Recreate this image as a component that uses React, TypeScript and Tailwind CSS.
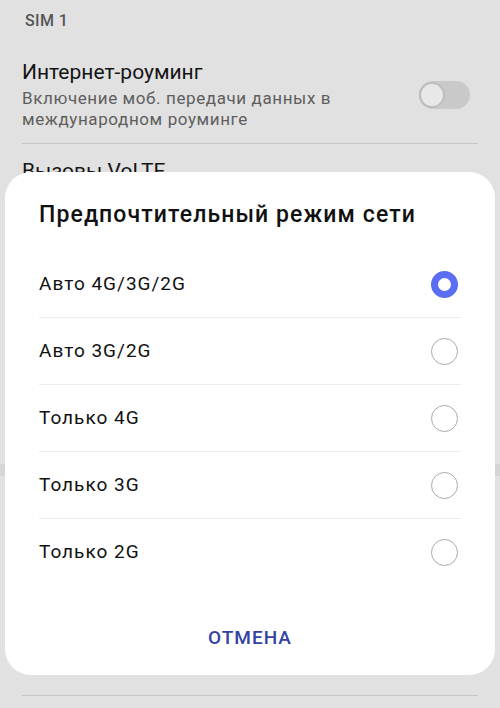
import React from "react";

const options = ["Авто 4G/3G/2G", "Авто 3G/2G", "Только 4G", "Только 3G", "Только 2G"];

export default function App() {
  return (
    <div
      className="relative w-[500px] h-[708px] overflow-hidden bg-[#e1e1e1]"
      style={{ fontFamily: "Roboto, 'Noto Sans', sans-serif" }}
    >
      {/* underlying page */}
      <div className="flex flex-col">
        <div className="h-[42px] pl-[25px] flex items-center text-[16px] tracking-[0.4px] font-medium text-[#555555]">SIM 1</div>
        <div className="mx-[22px] flex items-center justify-between pt-[16px] pb-[13px]">
          <div className="flex flex-col">
            <div className="text-[21px] leading-[28px] text-[#141414]">Интернет-роуминг</div>
            <div className="text-[17px] leading-[21px] tracking-[0.6px] text-[#5e5e5e] mt-[2px]">
              Включение моб. передачи данных в
              <br />
              международном роуминге
            </div>
          </div>
          <div className="relative w-[51px] h-[28px] rounded-full bg-[#c9c9c9] mr-[8px] mt-[2px]">
            <div className="absolute left-0 top-[1px] w-[26px] h-[26px] rounded-full bg-[#e8e8e8] border-[2px] border-[#bdbdbd]" />
          </div>
        </div>
        <div className="mx-[22px] h-px bg-[#c6c6c6]" />
        <div className="mx-[22px] pt-[13px] text-[21px] leading-[28px] text-[#141414]">Вызовы VoLTE</div>
        <div className="h-[279px]" />
        <div className="h-[12px] bg-[#d5d5d5]" />
        <div className="h-[219px]" />
        <div className="mx-[22px] h-px bg-[#c6c6c6]" />
      </div>

      {/* dialog */}
      <div className="absolute left-[5px] right-[5px] top-[172px] h-[503px] rounded-[26px] bg-white flex flex-col px-[34px]">
        <div className="pt-[28px] h-[79px] text-[23px] leading-[30px] tracking-[1.1px] text-[#111111] font-medium">
          Предпочтительный режим сети
        </div>
        <div className="flex flex-col">
          {options.map((o, i) => (
            <div
              key={o}
              className={
                "h-[67px] flex items-center justify-between " +
                (i < options.length - 1 ? "border-b border-[#ececec]" : "")
              }
            >
              <span className="text-[19px] tracking-[1px] text-[#111111]">{o}</span>
              {i === 0 ? (
                <div className="w-[27px] h-[27px] rounded-full border-[7px] border-[#5a6ef2] mr-[3px]" />
              ) : (
                <div className="w-[27px] h-[27px] rounded-full border-[1.5px] border-[#a9a9a9] mr-[3px]" />
              )}
            </div>
          ))}
        </div>
        <div className="flex-1 flex items-center justify-center pt-[15px]">
          <span className="text-[19px] tracking-[1px] font-medium text-[#3442a3]">ОТМЕНА</span>
        </div>
      </div>
    </div>
  );
}
